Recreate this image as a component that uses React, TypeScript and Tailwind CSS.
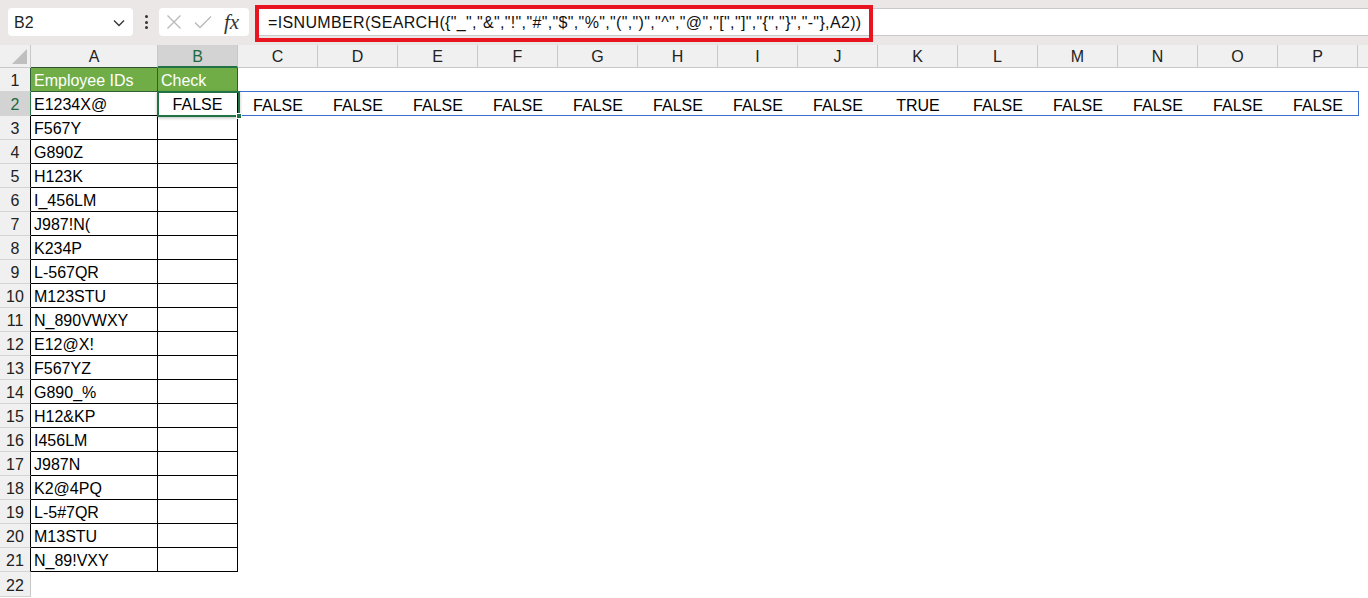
import React from "react";

const COLS = ["A", "B", "C", "D", "E", "F", "G", "H", "I", "J", "K", "L", "M", "N", "O", "P"];
const IDS = [
  "E1234X@", "F567Y", "G890Z", "H123K", "I_456LM", "J987!N(", "K234P", "L-567QR", "M123STU", "N_890VWXY",
  "E12@X!", "F567YZ", "G890_%", "H12&KP", "I456LM", "J987N", "K2@4PQ", "L-5#7QR", "M13STU", "N_89!VXY",
];
const SPILL = ["FALSE", "FALSE", "FALSE", "FALSE", "FALSE", "FALSE", "FALSE", "FALSE", "FALSE", "TRUE", "FALSE", "FALSE", "FALSE", "FALSE", "FALSE"];
const FORMULA = '=ISNUMBER(SEARCH({"_","&","!","#","$","%","(",")","^","@","[","]","{","}","-"},A2))';

function TopBar() {
  return (
    <div className="relative flex h-[45px] items-start bg-[#ebe7e7]">
      <div className="ml-2 mt-2 flex h-[28px] w-[125px] items-center justify-between rounded-[4px] bg-white pl-[6px] pr-[8px] pt-px text-[16px] text-[#222]">
        <span>B2</span>
        <svg width="12" height="8" viewBox="0 0 12 8" fill="none" stroke="#333" strokeWidth="1.3">
          <path d="M1 1.5l5 5 5-5" />
        </svg>
      </div>
      <div className="mt-[15px] flex w-[26px] flex-col items-center gap-[2.5px]">
        <span className="h-[3px] w-[3px] rounded-full bg-[#333]" />
        <span className="h-[3px] w-[3px] rounded-full bg-[#333]" />
        <span className="h-[3px] w-[3px] rounded-full bg-[#333]" />
      </div>
      <div className="mt-2 flex h-[28px] w-[90px] items-center rounded-[4px] bg-white pl-[7px]">
        <svg width="16" height="16" viewBox="0 0 16 16" fill="none" stroke="#b9b9b9" strokeWidth="1.3">
          <path d="M1.5 1.5l13 13M14.5 1.5l-13 13" />
        </svg>
        <svg className="ml-[12px]" width="18" height="14" viewBox="0 0 18 14" fill="none" stroke="#b9b9b9" strokeWidth="1.3">
          <path d="M1 7.5l5 5L17 1.5" />
        </svg>
        <span className="ml-[12px] font-['Liberation_Serif',serif] text-[21px] italic leading-none text-[#333]">fx</span>
      </div>
      <div className="relative ml-[8px] mt-2 flex h-[28px] flex-1 items-center border-y border-[#c9c9c9] bg-white pl-[11px] pt-px text-[16px] tracking-[0.35px] text-[#111]">
        <span className="whitespace-nowrap">{FORMULA}</span>
        <div className="pointer-events-none absolute left-[-2px] top-[-4px] h-[37px] w-[618px] border-4 border-[#e8141f]" />
      </div>
    </div>
  );
}

function HeaderRow() {
  return (
    <div className="flex h-[23px] bg-[#f0f0f0] text-[16px] text-[#222]">
      <div className="relative w-[31px] border-r border-b border-[#c8c8c8]">
        <svg className="absolute bottom-[3px] right-[3px]" width="15" height="15" viewBox="0 0 15 15">
          <path d="M15 0V15H0Z" fill="#bfbfbf" />
        </svg>
      </div>
      {COLS.map((c) => {
        const w = c === "A" ? "w-[127px]" : "w-[80px]";
        if (c === "B")
          return (
            <div key={c} className={`${w} flex items-center justify-center border-r border-b-2 border-r-[#c8c8c8] border-b-[#217346] bg-[#d3d3d3] pt-[3px] text-[#1d6b3f]`}>
              {c}
            </div>
          );
        return (
          <div key={c} className={`${w} flex items-center justify-center border-r border-b pt-[2px] ${c === "A" ? "border-r-[#c8c8c8] border-b-[#2f4f2f]" : "border-[#c8c8c8]"}`}>
            {c}
          </div>
        );
      })}
      <div className="flex-1 border-b border-[#c8c8c8]" />
    </div>
  );
}

function RowHead({ n, sel, edge }: { n: number; sel?: boolean; edge: string }) {
  return (
    <div
      className={`flex w-[31px] items-center justify-center border-b border-r border-b-[#d4d4d4] pt-[3px] text-[16px] ${edge} ${
        sel ? "bg-[#d3d3d3] text-[#1d6b3f]" : "bg-[#f0f0f0] text-[#222]"
      }`}
    >
      {n}
    </div>
  );
}

function Blank() {
  return (
    <>
      {Array.from({ length: 14 }).map((_, i) => (
        <div key={i} className="w-[80px]" />
      ))}
      <div className="flex-1" />
    </>
  );
}

export default function App() {
  return (
    <div className="h-[598px] w-[1368px] overflow-hidden bg-white font-['Liberation_Sans',Arial,sans-serif]">
      <TopBar />
      <HeaderRow />
      {/* row 1: table header */}
      <div className="flex h-[24px] text-[16px]">
        <RowHead n={1} edge="border-r-[#2f5f36]" />
        <div className="flex w-[127px] items-center border-r border-b border-[#2f5f36] bg-[#70ad47] pl-[3px] pt-[3px] text-white">Employee IDs</div>
        <div className="flex w-[80px] items-center border-r border-b border-[#2f5f36] bg-[#70ad47] pl-[3px] pt-[3px] text-white">Check</div>
        <Blank />
      </div>
      {/* row 2: spill */}
      <div className="relative flex h-[24px] text-[16px] text-black">
        <RowHead n={2} sel edge="border-r-[#217346]" />
        <div className="flex w-[127px] items-center border-r border-b border-black pl-[3px] pt-[3px]">{IDS[0]}</div>
        {SPILL.map((v, i) => (
          <div key={i} className={`flex w-[80px] items-center justify-center pt-[3px] ${i === 0 ? "border-r border-b border-black" : ""}`}>
            {v}
          </div>
        ))}
        <div className="flex-1" />
        <div className="pointer-events-none absolute left-[158px] top-[-1px] h-[25px] w-[1201px] border border-[#3a6fd0]" />
        <div className="pointer-events-none absolute left-[157px] top-[-1px] h-[26px] w-[83px] border-2 border-[#217346] shadow-[0_1px_3px_rgba(0,0,0,0.25)]">
          <div className="absolute bottom-[-4px] right-[-4px] h-[6px] w-[6px] border border-white bg-[#217346]" />
        </div>
      </div>
      {IDS.slice(1).map((id, i) => (
        <div key={id} className="flex h-[24px] text-[16px] text-black">
          <RowHead n={i + 3} edge="border-r-black" />
          <div className="flex w-[127px] items-center border-r border-b border-black pl-[3px] pt-[3px]">{id}</div>
          <div className="w-[80px] border-r border-b border-black" />
          <Blank />
        </div>
      ))}
      <div className="flex h-[25px] text-[16px]">
        <RowHead n={22} edge="border-r-[#c8c8c8]" />
        <div className="w-[127px]" />
        <div className="w-[80px]" />
        <Blank />
      </div>
    </div>
  );
}
